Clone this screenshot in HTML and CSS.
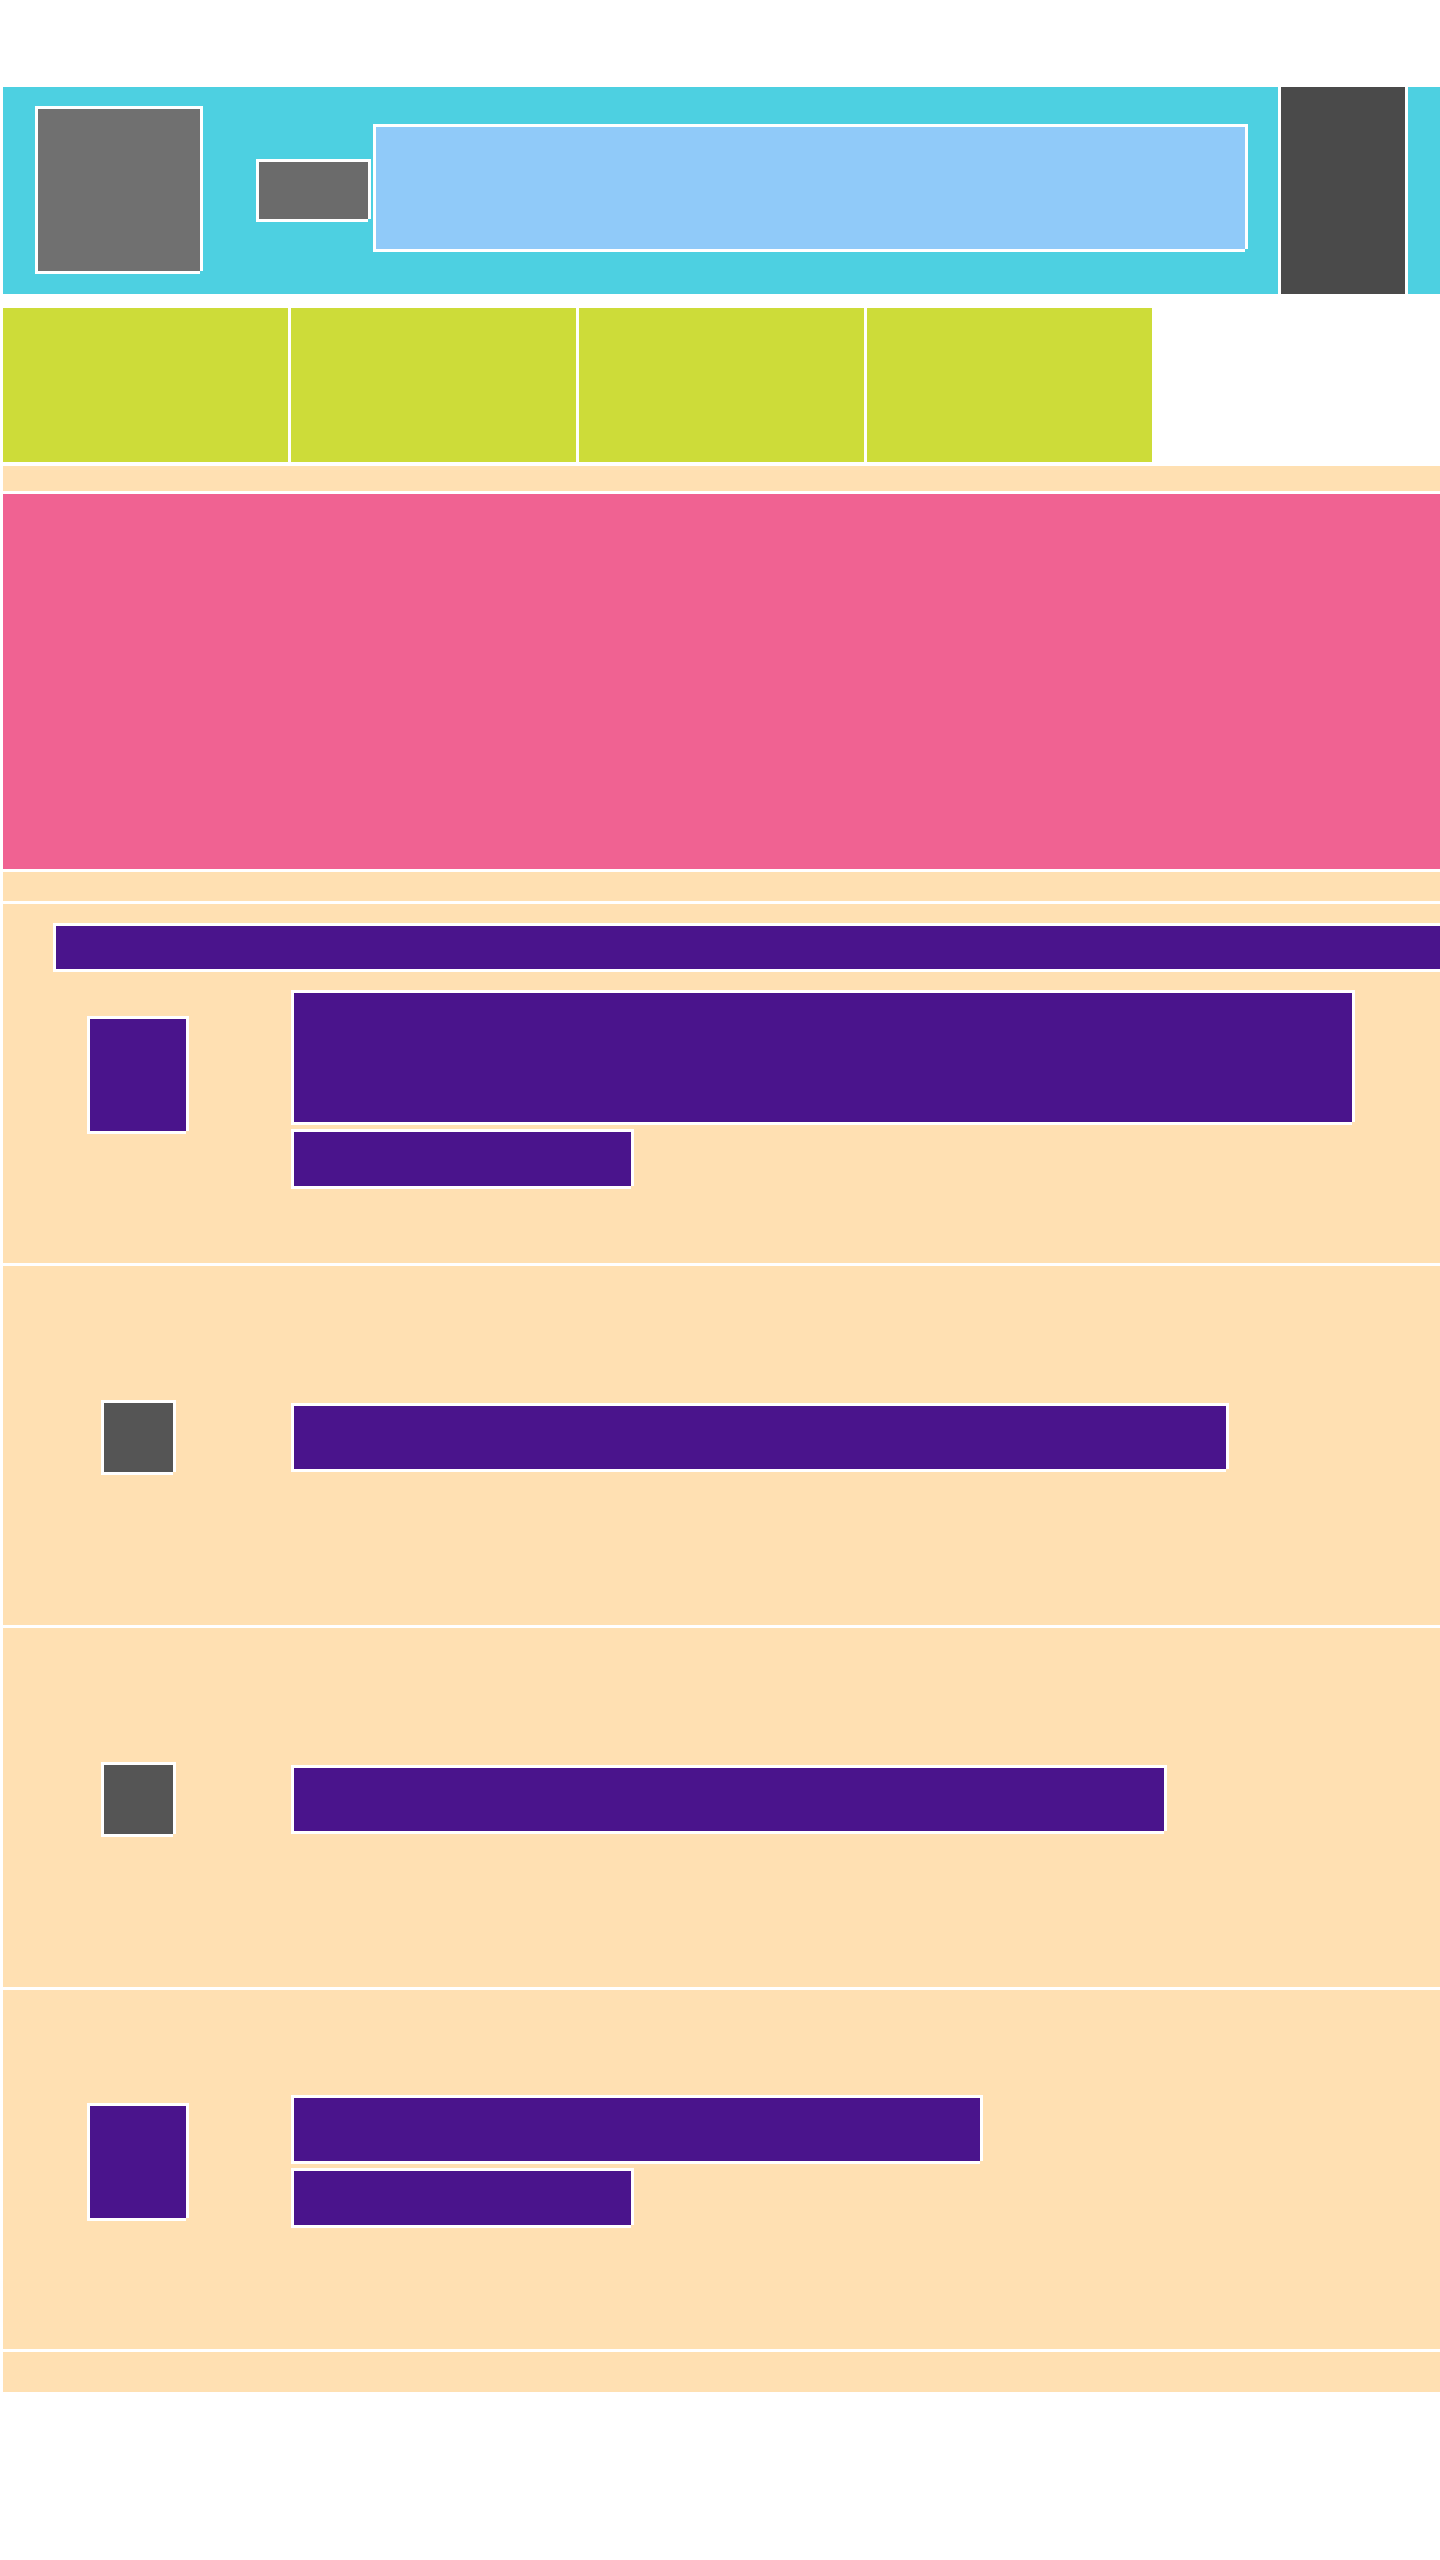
FILE: index.html
```html
<!DOCTYPE html>
<html lang="en">
<head>
<meta charset="utf-8">
<title>Wireframe</title>
<link rel="stylesheet" href="styles.css">
</head>
<body>
<div class="page">
  <header class="header wf">
    <div class="logo wf"></div>
    <div class="brand wf"></div>
    <div class="search wf"></div>
    <div class="account"></div>
  </header>

  <nav class="nav">
    <div class="nav-item wf"></div>
    <div class="nav-item wf"></div>
    <div class="nav-item wf"></div>
    <div class="nav-item wf"></div>
  </nav>

  <div class="band band-a wf"></div>
  <section class="hero wf"></section>
  <div class="band band-b wf"></div>

  <section class="list">
    <article class="item item-first wf">
      <div class="section-bar wf"></div>
      <div class="row">
        <div class="media"><div class="thumb thumb-lift wf"></div></div>
        <div class="text">
          <div class="title title-wide wf"></div>
          <div class="meta wf"></div>
        </div>
      </div>
    </article>

    <article class="item wf">
      <div class="row">
        <div class="media"><div class="icon wf"></div></div>
        <div class="text">
          <div class="title title-b wf"></div>
        </div>
      </div>
    </article>

    <article class="item wf">
      <div class="row">
        <div class="media"><div class="icon wf"></div></div>
        <div class="text">
          <div class="title title-c wf"></div>
        </div>
      </div>
    </article>

    <article class="item wf">
      <div class="row">
        <div class="media"><div class="thumb wf"></div></div>
        <div class="text">
          <div class="title title-d wf"></div>
          <div class="meta wf"></div>
        </div>
      </div>
    </article>
  </section>

  <footer class="footer wf"></footer>
</div>
</body>
</html>
```

FILE: styles.css
```css
html {
  overflow-x: hidden;
}

body {
  margin: 0;
  background: #ffffff;
  font-family: "Liberation Sans", Arial, sans-serif;
}

.page {
  width: 1440px;
  padding-top: 84px;
}

/* wireframe box: white frame drawn as top/left border + right/bottom shadows */
.wf {
  box-sizing: border-box;
  border-top: 3px solid #ffffff;
  border-left: 3px solid #ffffff;
  box-shadow: 3px 0 0 #ffffff, 0 3px 0 #ffffff;
}

/* header */
.header {
  display: flex;
  align-items: flex-start;
  height: 210px;
  background: #4dd0e1;
}

.logo {
  flex: none;
  width: 165px;
  height: 165px;
  margin: 19px 0 0 32px;
  background: #707070;
}

.brand {
  flex: none;
  width: 112px;
  height: 60px;
  margin: 72px 0 0 56px;
  background: #6b6b6b;
}

.search {
  flex: none;
  width: 872px;
  height: 125px;
  margin: 37px 0 0 5px;
  background: #90caf9;
}

.account {
  flex: none;
  align-self: stretch;
  box-sizing: border-box;
  width: 127px;
  margin-left: 33px;
  border-left: 3px solid #ffffff;
  box-shadow: 3px 0 0 #ffffff;
  background: #4a4a4a;
}

/* navigation */
.nav {
  display: flex;
  margin-top: 11px;
}

.nav-item {
  flex: none;
  width: 288px;
  height: 157px;
  background: #cddc39;
}

/* bands */
.band {
  background: #ffe0b2;
}

.band-a {
  height: 28px;
  margin-top: 1px;
}

.band-b {
  height: 32px;
}

.hero {
  height: 378px;
  background: #f06292;
}

/* list */
.list {
  display: flex;
  flex-direction: column;
}

.item {
  display: flex;
  flex-direction: column;
  justify-content: center;
  height: 362px;
  padding-bottom: 19px;
  background: #ffe0b2;
  overflow: hidden;
}

.item-first {
  justify-content: flex-start;
  padding-top: 19px;
  padding-bottom: 0;
}

.section-bar {
  height: 46px;
  margin: 0 -20px 0 50px;
  background: #4a148c;
}

.item-first .row {
  margin-top: 21px;
}

.row {
  display: flex;
  align-items: center;
}

.media {
  flex: none;
  display: flex;
  justify-content: center;
  width: 267px;
  margin-right: 21px;
}

.thumb {
  width: 99px;
  height: 115px;
  background: #4a148c;
}

.thumb-lift {
  margin-bottom: 29px;
}

.icon {
  width: 72px;
  height: 72px;
  background: #555555;
}

.text {
  display: flex;
  flex-direction: column;
  align-items: flex-start;
  gap: 7px;
}

.title {
  height: 66px;
  background: #4a148c;
}

.title-wide {
  width: 1061px;
  height: 132px;
}

.title-b {
  width: 935px;
}

.title-c {
  width: 873px;
}

.title-d {
  width: 689px;
}

.meta {
  width: 340px;
  height: 57px;
  background: #4a148c;
}

/* footer */
.footer {
  height: 43px;
  background: #ffe0b2;
}
```
